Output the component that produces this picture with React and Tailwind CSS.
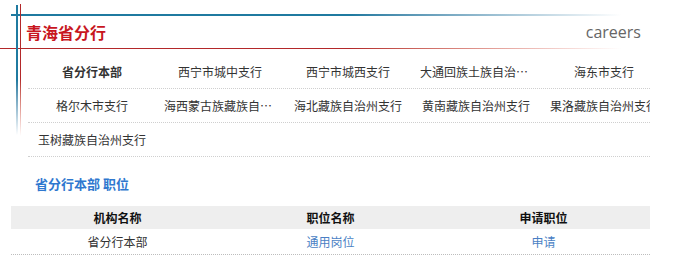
/* App.jsx - 青海省分行 careers list */

const branches = [
  ["省分行本部", "西宁市城中支行", "西宁市城西支行", "大通回族土族自治县支行", "海东市支行"],
  ["格尔木市支行", "海西蒙古族藏族自治州支行", "海北藏族自治州支行", "黄南藏族自治州支行", "果洛藏族自治州支行"],
  ["玉树藏族自治州支行"],
];

function BranchRow({ items }) {
  return (
    <div className="flex h-[34px] w-[622px] items-center border-b border-dotted border-[#cfcfcf]">
      {items.map((name) => (
        <div
          key={name}
          className={
            "w-[128px] shrink-0 truncate px-[8px] text-center text-[12px] leading-[33px] text-[#333] " +
            (name === "省分行本部" ? "font-bold" : "")
          }
        >
          {name}
        </div>
      ))}
    </div>
  );
}

export default function App() {
  return (
    <div className="relative h-[267px] w-[698px] overflow-hidden bg-white font-['Noto_Sans_CJK_SC',sans-serif]">
      {/* side lines */}
      <div className="absolute left-[16px] top-[5px] flex h-[130px] w-[2px] flex-col">
        <div className="h-[75px] bg-[#1f7aa0]" />
        <div className="flex-1 bg-gradient-to-b from-[#1f7aa0] to-white" />
      </div>
      <div className="absolute left-[20px] top-[4px] flex h-[132px] w-px flex-col">
        <div className="h-[75px] bg-[#b3282a]" />
        <div className="flex-1 bg-gradient-to-b from-[#b3282a] to-white" />
      </div>

      {/* header */}
      <div className="ml-[11px] mt-[14px] flex h-[2px] w-[610px]">
        <div className="w-[340px] bg-[#1f7aa0]" />
        <div className="flex-1 bg-gradient-to-r from-[#1f7aa0] to-white" />
      </div>
      <div className="flex h-[32px] items-center justify-between pl-[26px] pr-[57px]">
        <h1 className="text-[16px] font-bold text-[#c8161e]">青海省分行</h1>
        <span className="font-['Open_Sans',sans-serif] text-[16px] text-[#666]">careers</span>
      </div>
      <div className="flex h-px w-[621px]">
        <div className="w-[350px] bg-[#b3282a]" />
        <div className="flex-1 bg-gradient-to-r from-[#b3282a] to-white" />
      </div>

      {/* branch list */}
      <div className="ml-[28px] mt-[6px] w-[622px] overflow-hidden">
        {branches.map((row, i) => (
          <BranchRow key={i} items={row} />
        ))}
      </div>

      {/* jobs */}
      <h2 className="ml-[35px] mt-[19px] text-[13px] font-bold leading-[16px] text-[#2f78cf]">省分行本部 职位</h2>
      <div className="ml-[11px] mt-[14px] w-[639px] text-[12px]">
        <div className="grid h-[23px] grid-cols-3 items-center bg-[#eeeeee] text-center font-bold text-[#111]">
          <span>机构名称</span>
          <span>职位名称</span>
          <span>申请职位</span>
        </div>
        <div className="grid h-[26px] grid-cols-3 items-center border-b border-dotted border-[#bdbdbd] text-center">
          <span className="text-[#333]">省分行本部</span>
          <span className="text-[#4a7fc4]">通用岗位</span>
          <span className="text-[#4a7fc4]">申请</span>
        </div>
      </div>
    </div>
  );
}
